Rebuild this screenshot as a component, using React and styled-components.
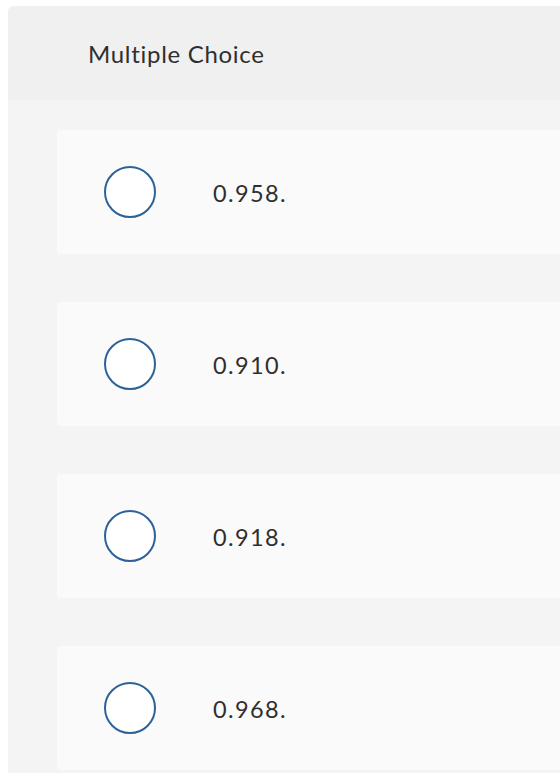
import React, { useState } from "react";
import styled, { createGlobalStyle } from "styled-components";

const GlobalStyle = createGlobalStyle`
  html, body {
    margin: 0;
    padding: 0;
    background: #ffffff;
    overflow: hidden;
  }
  body {
    font-family: Lato, "Open Sans", sans-serif;
  }
`;

const Page = styled.div`
  padding: 6px 0 0 8px;
  width: 760px;
`;

const Panel = styled.section`
  border-radius: 6px 0 0 0;
  overflow: hidden;
  background: #f4f4f4;
`;

const Header = styled.div`
  height: 94px;
  background: #f0f0f0;
  display: flex;
  align-items: center;
  padding-left: 80px;
  box-sizing: border-box;
  font-size: 24px;
  color: #2f2f2f;
  letter-spacing: 0.7px;
`;

const ChoiceList = styled.div`
  display: flex;
  flex-direction: column;
  gap: 48px;
  padding: 30px 0 8px 49px;
`;

const Choice = styled.label`
  display: flex;
  align-items: center;
  gap: 57px;
  height: 124px;
  padding-left: 47px;
  background: #fafafa;
  border-radius: 4px 0 0 4px;
  cursor: pointer;
`;

const Radio = styled.span`
  width: 52px;
  height: 52px;
  box-sizing: border-box;
  border-radius: 50%;
  border: 2px solid #2d6299;
  background: ${(p) => (p.checked ? "#2d6299" : "#ffffff")};
  box-shadow: ${(p) => (p.checked ? "inset 0 0 0 6px #ffffff" : "none")};
  flex-shrink: 0;
`;

const ChoiceText = styled.span`
  font-size: 23.5px;
  letter-spacing: 1.4px;
  color: #2f2f2f;
  margin-top: 2px;
`;

const options = ["0.958.", "0.910.", "0.918.", "0.968."];

export default function App() {
  const [selected, setSelected] = useState(null);

  return (
    <Page>
      <GlobalStyle />
      <Panel>
        <Header>Multiple Choice</Header>
        <ChoiceList>
          {options.map((option, i) => (
            <Choice key={option} onClick={() => setSelected(i)}>
              <Radio checked={selected === i} />
              <ChoiceText>{option}</ChoiceText>
            </Choice>
          ))}
        </ChoiceList>
      </Panel>
    </Page>
  );
}
